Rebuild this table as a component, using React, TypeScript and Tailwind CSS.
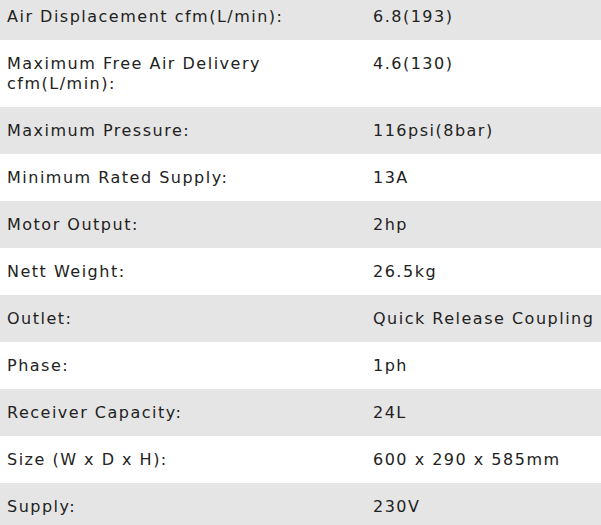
const specs: [string, string][] = [
  ['Air Displacement cfm(L/min):', '6.8(193)'],
  ['Maximum Free Air Delivery cfm(L/min):', '4.6(130)'],
  ['Maximum Pressure:', '116psi(8bar)'],
  ['Minimum Rated Supply:', '13A'],
  ['Motor Output:', '2hp'],
  ['Nett Weight:', '26.5kg'],
  ['Outlet:', 'Quick Release Coupling'],
  ['Phase:', '1ph'],
  ['Receiver Capacity:', '24L'],
  ['Size (W x D x H):', '600 x 290 x 585mm'],
  ['Supply:', '230V'],
];

export default function App() {
  return (
    <div className="h-[525px] w-[601px] overflow-hidden bg-white">
      <div className="-mt-[7px] flex flex-col font-['DejaVu_Sans',sans-serif] text-[16px] leading-[20px] tracking-[1.5px] text-[#222]">
        {specs.map(([label, value], i) => (
          <div
            key={label}
            className={`flex pt-[14px] pb-[13px] ${i % 2 === 0 ? 'bg-[#e5e5e5]' : 'bg-white'}`}
          >
            <div className="w-[373px] shrink-0 pl-[7px] pr-[70px]">{label}</div>
            <div className="whitespace-nowrap">{value}</div>
          </div>
        ))}
      </div>
    </div>
  );
}
